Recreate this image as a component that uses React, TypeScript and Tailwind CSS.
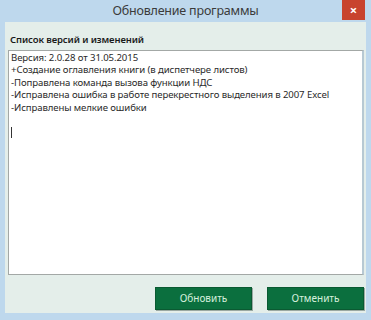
const lines = [
  'Версия: 2.0.28 от 31.05.2015',
  '+Создание оглавления книги (в диспетчере листов)',
  '-Поправлена команда вызова функции НДС',
  '-Исправлена ошибка в работе перекрестного выделения в 2007 Excel',
  '-Исправлены мелкие ошибки',
  '',
];

const font = { fontFamily: '"Noto Sans", "Open Sans", sans-serif' };

const DialogButton = ({ label }: { label: string }) => (
  <button
    className="h-[23px] w-[97px] border border-[#0a5a32] bg-[#0b6f3e] text-[10px] text-[#d6efdd] shadow-[1px_1px_0_#9aa8a2]"
    style={font}
  >
    {label}
  </button>
);

export default function App() {
  return (
    <div className="flex h-[320px] w-[371px] flex-col bg-[#bed8ed] px-[5px] pb-[7px]" style={font}>
      <div className="relative flex h-[22px] items-center justify-center">
        <span className="text-[12.5px] leading-none tracking-[-0.2px] text-[#3b3b3b]">Обновление программы</span>
        <div className="absolute right-[1px] top-0 flex h-[20px] w-[23px] items-center justify-center bg-[#c8432e] text-[13px] font-bold leading-none text-white">
          ×
        </div>
      </div>
      <div className="flex flex-1 flex-col bg-[#e4eeea] pb-[3px] pl-[3px] pr-[2px] pt-[10px]">
        <div className="mb-[2px] pl-[2px] text-[9.5px] font-semibold leading-[16px] tracking-[-0.1px] text-[#1a1a1a]">
          Список версий и изменений
        </div>
        <div className="h-[225px] border border-[#a3a8a6] border-r-[2px] border-r-[#b7c9d3] bg-white pl-[2px] pt-[1px] text-[9.6px] leading-[12.4px] tracking-[-0.1px] text-[#2a2a2a]">
          {lines.map((l, i) => (
            <div key={i} className="h-[12.4px] whitespace-nowrap">
              {l}
            </div>
          ))}
          <div className="flex h-[12.4px] items-center">
            <div className="h-[11px] w-px bg-[#333]" />
          </div>
        </div>
        <div className="mt-[12px] flex justify-end gap-[15px]">
          <DialogButton label="Обновить" />
          <DialogButton label="Отменить" />
        </div>
      </div>
    </div>
  );
}
